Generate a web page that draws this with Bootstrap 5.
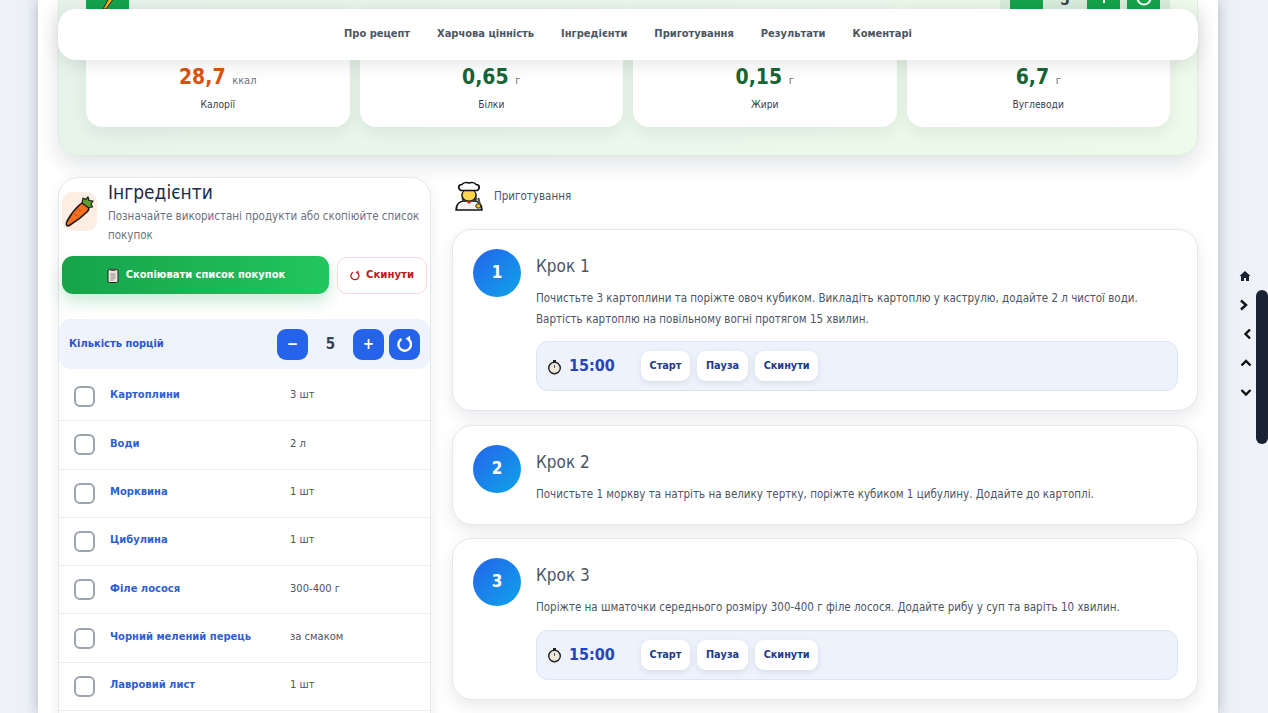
<!DOCTYPE html>
<html lang="uk">
<head>
<meta charset="UTF-8" />
<meta name="viewport" content="width=device-width, initial-scale=1.0" />
<link rel="stylesheet" href="https://cdn.jsdelivr.net/npm/bootstrap@5.3.2/dist/css/bootstrap.min.css" />
<title>Рецепт</title>
<style>
  html, body { height: 713px; overflow: hidden; }
  body { background: #eef2f8; font-family: "DejaVu Sans Condensed", "DejaVu Sans", sans-serif; color: #1f2a44; }
  .sheet { width: 1180px; height: 713px; margin-left: 38px; padding: 0 20px; background: #fff; box-shadow: 0 0 14px rgba(30,41,59,.3); overflow: hidden; position: relative; }

  /* hero block, its top is scrolled out of view */
  .hero { height: 156px; padding: 0 28px; border-radius: 0 0 20px 20px; background: linear-gradient(135deg, #e6f3ea, #eefaea); box-shadow: 0 8px 22px rgba(30,41,59,.14); border: 1px solid #dcebdf; border-top: 0; }
  .hero-top { height: 9px; margin: 0 -1px; }
  .bolt-box { width: 43px; height: 9px; background: #16a34a; overflow: hidden; }
  .serv-top { width: 170px; height: 9px; background: #d8ecdc; padding-left: 10px; overflow: hidden; }
  .serv-top span { width: 33px; height: 9px; background: #16a34a; overflow: hidden; display: block; flex: none; }
  .serv-top span.serv-top-val { width: 44px; background: none; color: #374151; font-size: 15px; font-weight: 700; line-height: 0; text-align: center; }
  .serv-top span.serv-top-last { margin-left: 7px; }
  .stats { height: 118px; margin: 0 -1px; gap: 10px; }
  .stat-box { background: #fff; height: 118px; border-radius: 0 0 16px 16px; box-shadow: 0 6px 16px rgba(30,41,59,.07); text-align: center; padding-top: 54px; flex: 1 1 0; }
  .stat-num { font-size: 21px; font-weight: 700; color: #166534; line-height: 28px; }
  .stat-num.kcal { color: #d9530f; }
  .stat-unit { font-size: 11px; font-weight: 400; color: #6b7280; }
  .stat-label { font-size: 10.2px; color: #374151; margin-top: 3px; line-height: 14px; }

  .top-menu { position: absolute; top: 9px; left: 20px; right: 20px; height: 51px; padding-bottom: 1px; background: #fff; border-radius: 18px; box-shadow: 0 4px 18px rgba(30,41,59,.12); gap: 27px; }
  .top-menu a { font-size: 11px; font-weight: 700; color: #4b5563; text-decoration: none; }

  .body-row { margin-top: 21px; gap: 21px; }
  .left-col { width: 373px; flex: none; }
  .right-col { flex: 1 1 0; min-width: 0; }

  .ingr-card { border: 1px solid #e5e7eb; border-radius: 20px; box-shadow: 0 4px 14px rgba(30,41,59,.08); background: #fff; padding: 2px 0 0; height: 700px; }
  .carrot-box { width: 35px; height: 39px; background: #fdeee3; border-radius: 10px; margin: 12px 11px 0 3px; flex: none; }
  .ingr-title { font-size: 19px; font-weight: 400; line-height: 24px; margin: 0; color: #1e2a4a; }
  .ingr-sub { font-size: 11.5px; color: #6b7280; line-height: 19px; margin: 3px 0 0; }
  .copy-row { margin-top: 11px; padding: 0 3px; }
  .copy-btn { width: 267px; height: 38px; border: 0; border-radius: 11px; background: linear-gradient(90deg, #16a34a, #22c55e); color: #fff; font-size: 11px; font-weight: 700; box-shadow: 0 8px 16px rgba(22,163,74,.22); gap: 6px; }
  .reset-btn { width: 90px; height: 37px; border: 1px solid #fbd5d5; border-radius: 10px; background: #fff; color: #b91c1c; font-size: 11.3px; font-weight: 700; gap: 6px; }
  .serv-bar { height: 50px; background: #eef3fd; border-radius: 12px; padding: 0 10px; margin-top: 25px; }
  .serv-label { font-size: 11px; font-weight: 700; color: #2f55c8; }
  .serv-btn { width: 31px; height: 31px; border: 0; border-radius: 9px; background: #2563eb; color: #fff; font-weight: 700; font-size: 15px; padding: 0; }
  .serv-reset { margin-left: 5px; }
  .serv-val { width: 45px; text-align: center; font-size: 15px; font-weight: 700; color: #374151; }

  .ingr-list { margin-top: 4px; }
  .ingr-row { height: 48.3px; border-bottom: 1px solid #e9edf2; padding-left: 15px; }
  .ingr-check { width: 21px; height: 21px; border: 2px solid #9ca3af; border-radius: 6px; flex: none; }
  .ingr-name { width: 180px; margin-left: 15px; font-size: 11.1px; font-weight: 700; color: #2f5fd0; padding-bottom: 2px; }
  .ingr-qty { font-size: 11.1px; color: #4b5563; padding-bottom: 2px; }

  .prep-head { height: 36px; margin-bottom: 16px; gap: 10px; padding: 1px 0 0 3px; }
  .prep-head span { font-size: 11.5px; color: #4b5563; margin: 2px 0 0 1px; }
  .step-box { border: 1px solid #e5e7eb; border-radius: 20px; box-shadow: 0 6px 16px rgba(30,41,59,.1); padding: 19px 19px 19px 20px; margin-bottom: 13.5px; gap: 15px; background: #fff; }
  .step-num { width: 48px; height: 48px; border-radius: 50%; background: linear-gradient(135deg, #2563eb, #0ea5e9); color: #fff; font-size: 17px; font-weight: 700; flex: none; }
  .step-title { font-size: 17px; font-weight: 400; color: #4b5563; margin: 4px 0 9px; line-height: 26px; }
  .step-text { font-size: 11.5px; line-height: 20.7px; color: #4b5563; margin: 0; }
  .timer-bar { height: 50px; border: 1px solid #dbe5f7; border-radius: 12px; background: #edf2fc; padding: 0 10px; margin-top: 12px; }
  .timer-time { font-size: 16px; font-weight: 700; color: #2546b8; width: 64px; margin-left: 7px; }
  .timer-btn { height: 30px; padding: 0 8.5px; border: 0; border-radius: 9px; background: #fff; color: #1e3a8a; font-size: 10.8px; font-weight: 700; box-shadow: 0 2px 6px rgba(30,41,59,.1); margin-right: 7.5px; }

  .side-nav { position: fixed; left: 1237px; top: 270px; width: 16px; gap: 13px; }
  .side-nav svg { display: block; }
  .side-home { margin-bottom: 2px; }
  .scroll-thumb { position: fixed; left: 1256px; top: 290px; width: 12px; height: 154px; background: #1a2333; border-radius: 6px; }
</style>
</head>
<body>
<div class="sheet">
  <div class="hero">
    <div class="hero-top d-flex justify-content-between">
      <div class="bolt-box d-flex justify-content-center">
        <svg width="14" height="9" viewBox="0 0 14 9"><path d="M8 -2h5L5 9H2z" fill="#f4b400" stroke="#222" stroke-width="1"/></svg>
      </div>
      <div class="serv-top d-flex">
        <span></span><span class="serv-top-val">5</span><span class="d-flex justify-content-center"><svg width="4" height="9" viewBox="0 0 4 9"><path d="M1 0h2v3H1z" fill="#fff"/></svg></span><span class="serv-top-last d-flex justify-content-center"><svg width="18" height="9" viewBox="0 0 18 9"><path d="M2.500 -2a6.500 6.500 0 0 0 13 0" fill="none" stroke="#fff" stroke-width="2"/></svg></span>
      </div>
    </div>
    <div class="stats d-flex">
      <div class="stat-box"><div class="stat-num kcal">28,7 <span class="stat-unit">ккал</span></div><div class="stat-label">Калорії</div></div>
      <div class="stat-box"><div class="stat-num">0,65 <span class="stat-unit">г</span></div><div class="stat-label">Білки</div></div>
      <div class="stat-box"><div class="stat-num">0,15 <span class="stat-unit">г</span></div><div class="stat-label">Жири</div></div>
      <div class="stat-box"><div class="stat-num">6,7 <span class="stat-unit">г</span></div><div class="stat-label">Вуглеводи</div></div>
    </div>
  </div>

  <nav class="top-menu d-flex align-items-center justify-content-center">
    <a href="#">Про рецепт</a><a href="#">Харчова цінність</a><a href="#">Інгредієнти</a><a href="#">Приготування</a><a href="#">Результати</a><a href="#">Коментарі</a>
  </nav>

  <div class="body-row d-flex">
    <div class="left-col">
      <div class="ingr-card">
        <div class="d-flex pe-2">
          <div class="carrot-box d-flex align-items-center justify-content-center">
            <svg width="35" height="39" viewBox="0 0 35 39">
              <path d="M5 33.500c-1.500-1-.5-3.500 1-6C9 22 14 16 18 12.500c2.500-2 5-2 7 0s2.500 4.500.5 7C21 24 13 30 8 33c-1 .7-2.200 1.200-3 .5z" fill="#f4701f" stroke="#1b1b1b" stroke-width="1.600"/>
              <path d="M20 11l1-5 2.500 1.500L26 5l1 3.500 4 .5-2 3 1.500 3-4.500.5z" fill="#5f9e2f" stroke="#1b1b1b" stroke-width="1.200" stroke-linejoin="round"/>
              <path d="M12 22l3 2M16 17l3 2" stroke="#c9500f" stroke-width="1"/>
            </svg>
          </div>
          <div>
            <h2 class="ingr-title">Інгредієнти</h2>
            <p class="ingr-sub">Позначайте використані продукти або скопіюйте список покупок</p>
          </div>
        </div>
        <div class="copy-row d-flex justify-content-between align-items-center">
          <button class="copy-btn d-flex align-items-center justify-content-center" type="button">
            <svg width="14" height="15" viewBox="0 0 14 15"><rect x="2" y="1.500" width="10" height="13" rx="1.500" fill="#e8e4d8" stroke="#222"/><rect x="4.500" y=".5" width="5" height="2.500" fill="#555"/><path d="M4.500 6h5M4.500 8h5M4.500 10h5M4.500 12h3" stroke="#777" stroke-width=".8"/></svg>
            Скопіювати список покупок
          </button>
          <button class="reset-btn d-flex align-items-center justify-content-center" type="button">
            <svg width="10" height="11" viewBox="0 0 10 11"><path d="M3 2.200a4 4 0 1 0 4 .1" fill="none" stroke="#b91c1c" stroke-width="1.300"/><path d="M8.300 .6l.3 3.400-3-1.400z" fill="#b91c1c"/></svg>
            Скинути
          </button>
        </div>
        <div class="serv-bar d-flex align-items-center">
          <span class="serv-label flex-grow-1">Кількість порцій</span>
          <button class="serv-btn" type="button">−</button>
          <span class="serv-val">5</span>
          <button class="serv-btn" type="button">+</button>
          <button class="serv-btn serv-reset d-flex align-items-center justify-content-center" type="button">
            <svg width="18" height="18" viewBox="0 0 18 18"><path d="M5.500 4a6.300 6.300 0 1 0 6.800 .3" fill="none" stroke="#fff" stroke-width="2.400"/><path d="M14 .8l.4 5.700-5-2.700z" fill="#fff"/></svg>
          </button>
        </div>
        <div class="ingr-list">
          <div class="ingr-row d-flex align-items-center"><span class="ingr-check"></span><span class="ingr-name">Картоплини</span><span class="ingr-qty">3 шт</span></div>
          <div class="ingr-row d-flex align-items-center"><span class="ingr-check"></span><span class="ingr-name">Води</span><span class="ingr-qty">2 л</span></div>
          <div class="ingr-row d-flex align-items-center"><span class="ingr-check"></span><span class="ingr-name">Морквина</span><span class="ingr-qty">1 шт</span></div>
          <div class="ingr-row d-flex align-items-center"><span class="ingr-check"></span><span class="ingr-name">Цибулина</span><span class="ingr-qty">1 шт</span></div>
          <div class="ingr-row d-flex align-items-center"><span class="ingr-check"></span><span class="ingr-name">Філе лосося</span><span class="ingr-qty">300-400 г</span></div>
          <div class="ingr-row d-flex align-items-center"><span class="ingr-check"></span><span class="ingr-name">Чорний мелений перець</span><span class="ingr-qty">за смаком</span></div>
          <div class="ingr-row d-flex align-items-center"><span class="ingr-check"></span><span class="ingr-name">Лавровий лист</span><span class="ingr-qty">1 шт</span></div>
        </div>
      </div>
    </div>

    <div class="right-col">
      <div class="prep-head d-flex align-items-center">
        <svg width="28" height="30" viewBox="3 0 24 30" preserveAspectRatio="none">
          <path d="M4 29c0-6 3-9 7-9h8c4 0 7 3 7 9z" fill="#f4f4f4" stroke="#111" stroke-width="1.500"/>
          <path d="M12 20l3 3 3-3z" fill="#d92c20"/>
          <path d="M9 12c-1 4 0 8 1 9h2V12zM21 12c1 4 1 7 0 9h-2V12z" fill="#3a3a3a"/>
          <circle cx="15" cy="14" r="6" fill="#fcd34d" stroke="#111" stroke-width="1"/>
          <path d="M8 9.500C5.500 8 5.500 3.500 9 3.500 10 1.500 13 1 15 2c2-1 5-.5 6 1.500 3.500 0 3.500 4.500 1 6z" fill="#fff" stroke="#111" stroke-width="1.500"/>
          <path d="M23 17l1 6" stroke="#555" stroke-width="2"/>
          <circle cx="23" cy="25" r="2.200" fill="#fcc21b" stroke="#111" stroke-width=".8"/>
        </svg>
        <span>Приготування</span>
      </div>

      <div class="step-box d-flex">
        <div class="step-num d-flex align-items-center justify-content-center">1</div>
        <div class="flex-grow-1">
          <h3 class="step-title">Крок 1</h3>
          <p class="step-text">Почистьте 3 картоплини та поріжте овоч кубиком. Викладіть картоплю у каструлю, додайте 2 л чистої води. Вартість картоплю на повільному вогні протягом 15 хвилин.</p>
          <div class="timer-bar d-flex align-items-center">
            <svg width="15" height="17" viewBox="0 0 15 17"><circle cx="7.500" cy="10" r="5.800" fill="#efe9dc" stroke="#222" stroke-width="1.400"/><path d="M6 2h3v2H6z" fill="#222"/><path d="M7.500 10V7" stroke="#555"/></svg>
            <span class="timer-time">15:00</span>
            <button class="timer-btn ms-2" type="button">Старт</button><button class="timer-btn" type="button">Пауза</button><button class="timer-btn" type="button">Скинути</button>
          </div>
        </div>
      </div>

      <div class="step-box d-flex">
        <div class="step-num d-flex align-items-center justify-content-center">2</div>
        <div class="flex-grow-1">
          <h3 class="step-title">Крок 2</h3>
          <p class="step-text">Почистьте 1 моркву та натріть на велику тертку, поріжте кубиком 1 цибулину. Додайте до картоплі.</p>
        </div>
      </div>

      <div class="step-box d-flex">
        <div class="step-num d-flex align-items-center justify-content-center">3</div>
        <div class="flex-grow-1">
          <h3 class="step-title">Крок 3</h3>
          <p class="step-text">Поріжте на шматочки середнього розміру 300-400 г філе лосося. Додайте рибу у суп та варіть 10 хвилин.</p>
          <div class="timer-bar d-flex align-items-center">
            <svg width="15" height="17" viewBox="0 0 15 17"><circle cx="7.500" cy="10" r="5.800" fill="#efe9dc" stroke="#222" stroke-width="1.400"/><path d="M6 2h3v2H6z" fill="#222"/><path d="M7.500 10V7" stroke="#555"/></svg>
            <span class="timer-time">15:00</span>
            <button class="timer-btn ms-2" type="button">Старт</button><button class="timer-btn" type="button">Пауза</button><button class="timer-btn" type="button">Скинути</button>
          </div>
        </div>
      </div>
    </div>
  </div>
</div>

<div class="side-nav d-flex flex-column align-items-center">
  <svg class="side-home" width="12" height="12" viewBox="0 0 12 12"><path d="M6 1L.5 6h1.500v5h3V8h2v3h3V6h1.500z" fill="#1a2333"/></svg>
  <svg width="14" height="16" viewBox="0 0 14 16"><path d="M3 3.500L8 8l-5 4.500" fill="none" stroke="#111" stroke-width="2.400"/></svg>
  <svg width="14" height="16" viewBox="0 0 14 16"><path d="M12 3.500L7.500 8l4.500 4.500" fill="none" stroke="#111" stroke-width="2.400"/></svg>
  <svg width="14" height="16" viewBox="0 0 14 16"><path d="M3.500 10.500L8 6l4.500 4.500" fill="none" stroke="#111" stroke-width="2.400"/></svg>
  <svg width="14" height="16" viewBox="0 0 14 16"><path d="M3.500 6L8 10.500 12.500 6" fill="none" stroke="#111" stroke-width="2.400"/></svg>
</div>
<div class="scroll-thumb"></div>

<script src="https://cdn.jsdelivr.net/npm/bootstrap@5.3.2/dist/js/bootstrap.bundle.min.js"></script>
</body>
</html>
